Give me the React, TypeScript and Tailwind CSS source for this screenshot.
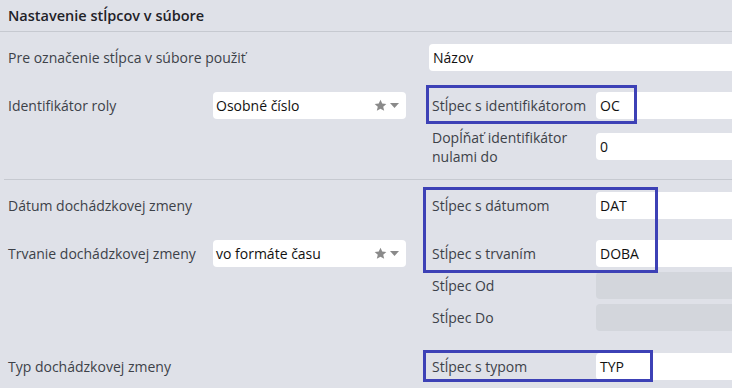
import React from "react";

const labelCls = "text-[14px] text-[#3d4148] leading-[19px]";
const inputBase =
  "h-[27px] rounded-[4px] flex items-center pl-[4px] text-[14px] text-[#111] shrink-0";

function Star() {
  return (
    <svg width="13" height="13" viewBox="0 0 24 24" className="fill-[#8a8a8a] shrink-0">
      <path d="M12 1.5l3.2 7 7.6.7-5.8 5.1 1.8 7.5L12 17.9l-6.8 3.9 1.8-7.5-5.8-5.1 7.6-.7z" />
    </svg>
  );
}

function Select({ value }: { value: string }) {
  return (
    <div className="w-[193px] h-[27px] bg-white rounded-[4px] flex items-center pl-[3px] pr-[7px] text-[14px] text-[#111]">
      <span className="flex-1 whitespace-nowrap">{value}</span>
      <Star />
      <svg width="9" height="6" viewBox="0 0 9 6" className="ml-[3px] fill-[#8a8a8a] shrink-0">
        <path d="M0 0h9L4.5 5z" />
      </svg>
    </div>
  );
}

function RightField({ label, value, disabled }: { label: React.ReactNode; value?: string; disabled?: boolean }) {
  return (
    <div className="flex items-center w-[400px]">
      <div className={`w-[164px] shrink-0 whitespace-nowrap ${labelCls}`}>{label}</div>
      <div className={`${inputBase} w-[200px] ${disabled ? "bg-[#d3d6dc]" : "bg-white"}`}>{value}</div>
    </div>
  );
}

function Row({
  mt,
  label,
  mid,
  right,
}: {
  mt: string;
  label?: React.ReactNode;
  mid?: React.ReactNode;
  right?: React.ReactNode;
}) {
  return (
    <div className={`flex items-center h-[27px] ${mt}`}>
      <div className={`w-[213px] shrink-0 pl-[8px] whitespace-nowrap ${labelCls}`}>{label}</div>
      <div className="w-[219px] shrink-0">{mid}</div>
      <div className="w-[400px] shrink-0">{right}</div>
    </div>
  );
}

export default function App() {
  return (
    <div
      className="relative w-[732px] h-[388px] overflow-hidden bg-[#dfe1e8]"
      style={{ fontFamily: '"Open Sans", "Noto Sans", sans-serif' }}
    >
      <div className="h-[32px] border-b border-[#c6c9d0] flex items-center pl-[8px] text-[14.5px] font-semibold text-[#1f2228]">
        Nastavenie stĺpcov v súbore
      </div>
      <div className="border-b border-[#c6c9d0] ml-[4px] pb-[19px]">
        <div className="-ml-[4px]">
          <Row
            mt="mt-[12px]"
            label="Pre označenie stĺpca v súbore použiť"
            right={<div className={`${inputBase} bg-white w-[400px] -ml-[3px]`}>Názov</div>}
          />
          <Row
            mt="mt-[21px]"
            label="Identifikátor roly"
            mid={<Select value="Osobné číslo" />}
            right={<RightField label="Stĺpec s identifikátorom" value="OC" />}
          />
          <Row
            mt="mt-[14px]"
            right={
              <RightField
                label={
                  <>
                    Dopĺňať identifikátor
                    <br />
                    nulami do
                  </>
                }
                value="0"
              />
            }
          />
        </div>
      </div>
      <Row mt="mt-[12px]" label="Dátum dochádzkovej zmeny" right={<RightField label="Stĺpec s dátumom" value="DAT" />} />
      <Row
        mt="mt-[21px]"
        label="Trvanie dochádzkovej zmeny"
        mid={<Select value="vo formáte času" />}
        right={<RightField label="Stĺpec s trvaním" value="DOBA" />}
      />
      <Row mt="mt-[5px]" right={<RightField label="Stĺpec Od" disabled />} />
      <Row mt="mt-[5px]" right={<RightField label="Stĺpec Do" disabled />} />
      <Row mt="mt-[22px]" label="Typ dochádzkovej zmeny" right={<RightField label="Stĺpec s typom" value="TYP" />} />

      <div className="absolute left-[426px] top-[85px] w-[211px] h-[39px] border-[3px] border-[#3d41b6]" />
      <div className="absolute left-[423px] top-[187px] w-[235px] h-[86px] border-[3px] border-[#3d41b6]" />
      <div className="absolute left-[423px] top-[350px] w-[230px] h-[32px] border-[3px] border-[#3d41b6]" />
    </div>
  );
}
